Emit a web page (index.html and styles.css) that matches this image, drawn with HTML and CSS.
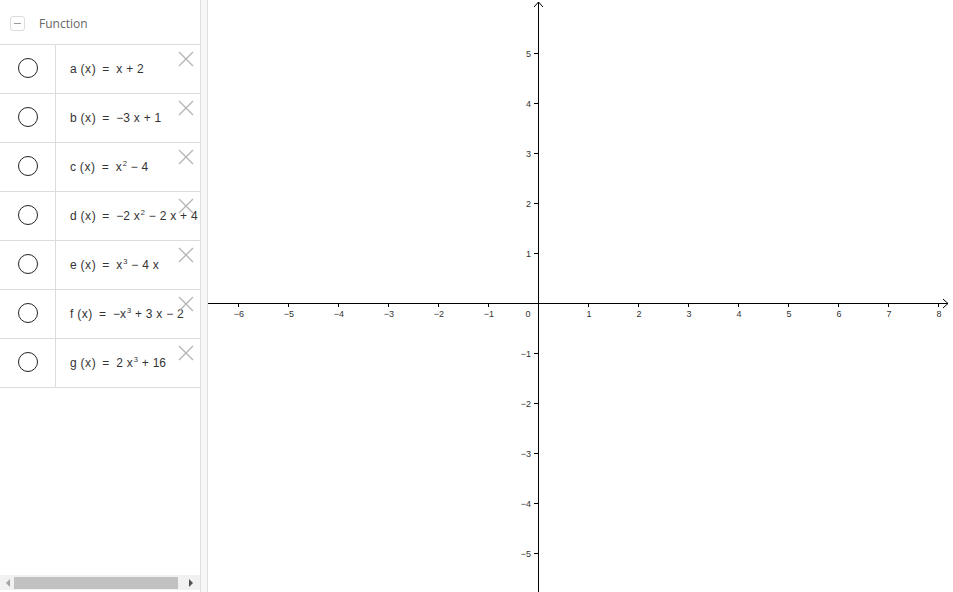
FILE: index.html
```html
<!DOCTYPE html>
<html>
<head>
<meta charset="utf-8">
<link rel="stylesheet" href="styles.css">
</head>
<body>
<div class="app">
  <div class="panel">
    <div class="header">
      <span class="collapse"><span class="dash"></span></span>
      <span class="title">Function</span>
    </div>
    <div class="row">
      <div class="mark"><span class="circle"></span></div>
      <div class="expr"><span class="txt">a <span class="par">(x)</span><span class="eq">=</span>x + 2</span></div>
      <svg class="del" viewBox="0 0 16 16"><path d="M1 1L15 15M15 1L1 15"/></svg>
    </div>
    <div class="row">
      <div class="mark"><span class="circle"></span></div>
      <div class="expr"><span class="txt">b <span class="par">(x)</span><span class="eq">=</span>−3 x + 1</span></div>
      <svg class="del" viewBox="0 0 16 16"><path d="M1 1L15 15M15 1L1 15"/></svg>
    </div>
    <div class="row">
      <div class="mark"><span class="circle"></span></div>
      <div class="expr"><span class="txt">c <span class="par">(x)</span><span class="eq">=</span>x<sup>2</sup> − 4</span></div>
      <svg class="del" viewBox="0 0 16 16"><path d="M1 1L15 15M15 1L1 15"/></svg>
    </div>
    <div class="row">
      <div class="mark"><span class="circle"></span></div>
      <div class="expr"><span class="txt">d <span class="par">(x)</span><span class="eq">=</span>−2 x<sup>2</sup> − 2 x + 4</span></div>
      <svg class="del" viewBox="0 0 16 16"><path d="M1 1L15 15M15 1L1 15"/></svg>
    </div>
    <div class="row">
      <div class="mark"><span class="circle"></span></div>
      <div class="expr"><span class="txt">e <span class="par">(x)</span><span class="eq">=</span>x<sup>3</sup> − 4 x</span></div>
      <svg class="del" viewBox="0 0 16 16"><path d="M1 1L15 15M15 1L1 15"/></svg>
    </div>
    <div class="row">
      <div class="mark"><span class="circle"></span></div>
      <div class="expr"><span class="txt">f <span class="par">(x)</span><span class="eq">=</span>−x<sup>3</sup> + 3 x − 2</span></div>
      <svg class="del" viewBox="0 0 16 16"><path d="M1 1L15 15M15 1L1 15"/></svg>
    </div>
    <div class="row">
      <div class="mark"><span class="circle"></span></div>
      <div class="expr"><span class="txt">g <span class="par">(x)</span><span class="eq">=</span>2 x<sup>3</sup> + 16</span></div>
      <svg class="del" viewBox="0 0 16 16"><path d="M1 1L15 15M15 1L1 15"/></svg>
    </div>
    <div class="spacer"></div>
    <div class="scrollbar">
      <span class="arrow left"></span>
      <span class="thumb"></span>
      <span class="arrow right"></span>
    </div>
  </div>
  <div class="divider"></div>
  <div class="graph">
    <svg class="plot" width="745" height="592" viewBox="0 0 745 592">
      <g class="axes">
        <path d="M0 303.5H740M735 299L740 303.5L735 308"/>
        <path d="M330.5 592V2M326 7L330.5 2L335 7"/>
        <path d="M30.5 303V307M80.5 303V307M130.5 303V307M180.5 303V307M230.5 303V307M280.5 303V307M380.5 303V307M430.5 303V307M480.5 303V307M530.5 303V307M580.5 303V307M630.5 303V307M680.5 303V307M730.5 303V307"/>
        <path d="M326 53.5H330M326 103.5H330M326 153.5H330M326 203.5H330M326 253.5H330M326 353.5H330M326 403.5H330M326 453.5H330M326 503.5H330M326 553.5H330"/>
      </g>
      <g class="xl">
        <text x="31" y="317">−6</text>
        <text x="81" y="317">−5</text>
        <text x="131" y="317">−4</text>
        <text x="181" y="317">−3</text>
        <text x="231" y="317">−2</text>
        <text x="281" y="317">−1</text>
        <text x="320" y="317">0</text>
        <text x="381" y="317">1</text>
        <text x="431" y="317">2</text>
        <text x="481" y="317">3</text>
        <text x="531" y="317">4</text>
        <text x="581" y="317">5</text>
        <text x="631" y="317">6</text>
        <text x="681" y="317">7</text>
        <text x="731" y="317">8</text>
      </g>
      <g class="yl">
        <text x="323" y="57">5</text>
        <text x="323" y="107">4</text>
        <text x="323" y="157">3</text>
        <text x="323" y="207">2</text>
        <text x="323" y="257">1</text>
        <text x="323" y="357">−1</text>
        <text x="323" y="407">−2</text>
        <text x="323" y="457">−3</text>
        <text x="323" y="507">−4</text>
        <text x="323" y="557">−5</text>
      </g>
    </svg>
  </div>
</div>
</body>
</html>
```
FILE: styles.css
```css
html, body {
  margin: 0;
  padding: 0;
  background: #fff;
}
body {
  font-family: "Liberation Sans", Arial, sans-serif;
  width: 953px;
  height: 592px;
  overflow: hidden;
}
.app {
  display: flex;
  width: 953px;
  height: 592px;
}
.panel {
  width: 200px;
  height: 592px;
  display: flex;
  flex-direction: column;
  overflow: hidden;
  flex: none;
}
.header {
  height: 44px;
  border-bottom: 1px solid #dcdcdc;
  display: flex;
  align-items: center;
  flex: none;
}
.collapse {
  width: 13px;
  height: 13px;
  border: 1px solid #dcdcdc;
  border-radius: 3px;
  margin-left: 10px;
  margin-top: 3px;
  display: flex;
  align-items: center;
  justify-content: center;
}
.dash {
  width: 7px;
  height: 1px;
  background: #9a9a9a;
}
.title {
  margin-left: 14px;
  font-family: "Open Sans", "Liberation Sans", sans-serif;
  font-size: 12px;
  color: #666;
  margin-top: 3px;
}
.row {
  height: 48px;
  border-bottom: 1px solid #dcdcdc;
  display: flex;
  position: relative;
  flex: none;
}
.mark {
  width: 56px;
  border-right: 1px solid #dcdcdc;
  display: flex;
  align-items: center;
  justify-content: center;
  padding-bottom: 3px;
  box-sizing: border-box;
  flex: none;
}
.circle {
  width: 18px;
  height: 18px;
  border: 1.5px solid #222;
  border-radius: 50%;
  margin-left: 1px;
}
.expr {
  padding-left: 14px;
  padding-bottom: 1px;
  display: flex;
  align-items: center;
  font-size: 12px;
  color: #333;
  white-space: nowrap;
  overflow: hidden;
  flex: 1;
  min-width: 0;
}
.txt {
  word-spacing: 0.5px;
}
.expr .par {
  letter-spacing: 0.6px;
}
.expr .eq {
  margin: 0 7px 0 6px;
}
.expr sup {
  font-size: 7.5px;
  line-height: 0;
  vertical-align: 5px;
  margin-left: 1px;
}
.del {
  position: absolute;
  top: 6px;
  right: 6px;
  width: 16px;
  height: 16px;
  fill: none;
  stroke: #b3b3b3;
  stroke-width: 1.3;
}
.spacer {
  flex: 1;
}
.scrollbar {
  height: 15px;
  margin-bottom: 2px;
  background: #f1f1f1;
  display: flex;
  align-items: center;
  flex: none;
}
.thumb {
  width: 164px;
  height: 12px;
  background: #c1c1c1;
  margin-left: 4px;
}
.arrow {
  width: 0;
  height: 0;
  border-top: 4px solid transparent;
  border-bottom: 4px solid transparent;
}
.arrow.left {
  border-right: 4px solid #a3a3a3;
  margin-left: 6px;
}
.arrow.right {
  border-left: 4px solid #505050;
  margin-left: 11px;
}
.divider {
  height: 592px;
  background: #f6f6f6;
  border-left: 1px solid #e0e0e0;
  border-right: 1px solid #e0e0e0;
  box-sizing: border-box;
  width: 8px;
  flex: none;
}
.graph {
  flex: 1;
  height: 592px;
  overflow: hidden;
}
.plot {
  display: block;
}
.axes path {
  fill: none;
  stroke: #000;
  stroke-width: 1;
}
.xl text, .yl text {
  font-family: "Liberation Sans", Arial, sans-serif;
  font-size: 9px;
  fill: #333;
}
.xl text {
  text-anchor: middle;
}
.yl text {
  text-anchor: end;
}
```
